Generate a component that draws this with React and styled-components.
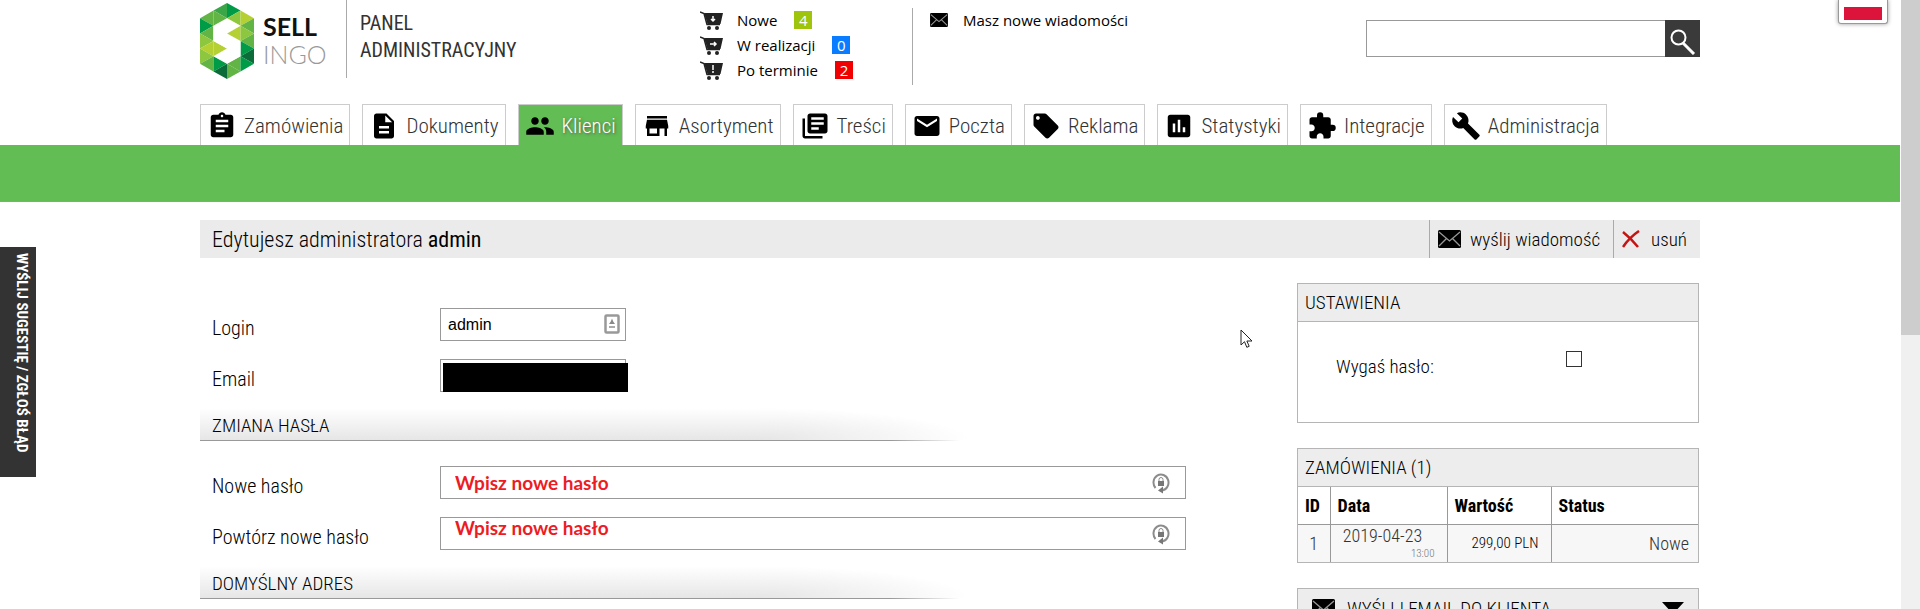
import React, { useState } from 'react';
import styled, { createGlobalStyle, css } from 'styled-components';
import {
  MdAssessment,
  MdAssignment,
  MdBuild,
  MdDescription,
  MdEmail,
  MdExtension,
  MdLibraryBooks,
  MdLocalOffer,
  MdPeople,
  MdStore
} from 'react-icons/md';

const narrow = '"Roboto Condensed", Roboto, sans-serif';

const tabs = [
  { label: 'Zamówienia', icon: MdAssignment },
  { label: 'Dokumenty', icon: MdDescription },
  { label: 'Klienci', icon: MdPeople, active: true },
  { label: 'Asortyment', icon: MdStore },
  { label: 'Treści', icon: MdLibraryBooks },
  { label: 'Poczta', icon: MdEmail },
  { label: 'Reklama', icon: MdLocalOffer },
  { label: 'Statystyki', icon: MdAssessment },
  { label: 'Integracje', icon: MdExtension },
  { label: 'Administracja', icon: MdBuild }
];

const statuses = [
  { label: 'Nowe', count: 4, color: '#9ec40b', mark: 'M13 5v5M11 8l2 2 2-2' },
  { label: 'W realizacji', count: 0, color: '#0a7cff', mark: 'M10 8h6M14 6l2 2-2 2' },
  { label: 'Po terminie', count: 2, color: '#f00000', mark: 'M13 4v5M13 10v2' }
];

const orders = [
  { id: 1, date: '2019-04-23', time: '13:00', total: '299,00 PLN', status: 'Nowe' }
];

// fill of every triangle in the four strips of the logo, top to bottom
const strips = [
  ['#62b445', '#009b47', '#62b445', '#8dc63f', '#b5d033', '#8dc63f', '#62b445'],
  ['#3aa648', '#62b445', '#62b445', '#fff', '#fff', '#b5d033', '#8dc63f', '#009b47', '#0b6b39'],
  ['#009b47', '#8dc63f', '#b5d033', '#b5d033', '#8dc63f', '#fff', '#fff', '#62b445', '#62b445'],
  ['#b5d033', '#62b445', '#8dc63f', '#62b445', '#009b47', '#0b6b39', '#009b47']
];

const logoTriangles = strips.flatMap((colors, strip) => {
  const w = 13;
  const h = 15;
  const tops = [2 * h, h, 0, h, 2 * h].map(y => y / 2);
  const x = strip * w;
  const left = tops[strip];
  const right = tops[strip + 1];
  const first = Math.min(left, right);
  return colors.map((fill, i) => {
    const y = first + (i * h) / 2;
    const onRight = (i % 2 === 0) === (right < left);
    const base = onRight ? x + w : x;
    const tip = onRight ? x : x + w;
    return { fill, points: `${base},${y} ${base},${y + h} ${tip},${y + h / 2}` };
  });
});

const LogoMark = () => (
  <svg width="54" height="76" viewBox="0 0 52 75" preserveAspectRatio="none" aria-hidden="true">
    {logoTriangles.map(t => (
      <polygon key={t.points} points={t.points} fill={t.fill} />
    ))}
    <polygon
      fill="#fff"
      points="26,15 39,22.5 26,30 39,37.5 39,52.5 26,60 13,52.5 26,45 13,37.5 13,22.5"
    />
  </svg>
);

const CartIcon = ({ mark }) => (
  <svg width="23" height="19" viewBox="0 0 23 19" aria-hidden="true">
    <path d="M0 1l4 1.500 3 11h13" fill="none" stroke="#222" strokeWidth="1.500" />
    <path d="M4 2h19l-2.500 11h-13z" fill="#222" />
    <circle cx="9" cy="17" r="2" fill="#222" />
    <circle cx="17" cy="17" r="2" fill="#222" />
    <path d={mark} fill="none" stroke="#fff" strokeWidth="1.500" />
  </svg>
);

const Envelope = ({ width, height }) => (
  <svg width={width} height={height} viewBox="0 0 23 18" aria-hidden="true">
    <rect width="23" height="18" rx="1.500" fill="#000" />
    <path
      d="M1 2l10.500 9L22 2M1 16l7.500-7.500M22 16l-7.500-7.500"
      fill="none"
      stroke="#999"
      strokeWidth="1.300"
    />
  </svg>
);

const CrossIcon = () => (
  <svg width="20" height="18" viewBox="0 0 20 18" aria-hidden="true">
    <path d="M1 2c5 4 11 10 15 15M17 1C11 5 5 11 1 17" fill="none" stroke="#c41414" strokeWidth="2.500" />
  </svg>
);

const SearchIcon = () => (
  <svg width="26" height="26" viewBox="0 0 26 26" aria-hidden="true">
    <circle cx="8.500" cy="8.500" r="7" fill="none" stroke="#fff" strokeWidth="2" />
    <path d="M13 14l11 11" stroke="#fff" strokeWidth="3" />
  </svg>
);

const CardIcon = () => (
  <svg width="16" height="20" viewBox="0 0 16 20" aria-hidden="true">
    <rect x="1.500" y="1.500" width="13" height="17" rx="1" fill="#fff" stroke="#999" strokeWidth="2.500" />
    <path d="M8 4.500l1.200 3L11 10H5l1.800-2.500z" fill="#888" />
    <path d="M5 13h6" stroke="#aaa" strokeWidth="2" />
  </svg>
);

const LockIcon = () => (
  <svg width="18" height="22" viewBox="0 0 18 22" aria-hidden="true">
    <path d="M3.500 16A7.500 8 0 1 1 10 18.500" fill="none" stroke="#8c8c8c" strokeWidth="2" />
    <path d="M11 14.500v7l-5-3z" fill="#777" />
    <rect x="6" y="9" width="6" height="5" fill="#777" />
    <path d="M7 9V7.500a2 2 0 0 1 4 0V9" fill="none" stroke="#888" />
  </svg>
);

const Pointer = () => (
  <PointerSvg width="13" height="20" viewBox="0 0 13 20" aria-hidden="true">
    <path
      d="M1 1v15l3.500-3.300 2.300 5.600 2.400-1-2.300-5.300H12z"
      fill="#fff"
      stroke="#222"
    />
  </PointerSvg>
);

const App = () => {
  const [login, setLogin] = useState('admin');
  const [expire, setExpire] = useState(false);

  return (
    <Shell>
      <GlobalStyle />
      <Page>
        <Container>
          <Header>
            <Brand href="#">
              <LogoMark />
              <BrandName>
                SELL
                <span>INGO</span>
              </BrandName>
            </Brand>
            <PanelName>
              PANEL
              <br />
              ADMINISTRACYJNY
            </PanelName>
            <StatusList>
              {statuses.map(s => (
                <Status key={s.label}>
                  <CartIcon mark={s.mark} />
                  <a href="#">{s.label}</a>
                  <Badge $color={s.color}>{s.count}</Badge>
                </Status>
              ))}
            </StatusList>
            <Messages href="#">
              <Envelope width={18} height={14} />
              Masz nowe wiadomości
            </Messages>
            <Search onSubmit={e => e.preventDefault()}>
              <input type="search" aria-label="Szukaj" />
              <button type="submit" aria-label="Szukaj">
                <SearchIcon />
              </button>
            </Search>
          </Header>
          <Tabs>
            {tabs.map(({ label, icon: Icon, active }) => (
              <Tab key={label} href="#" $active={active}>
                <Icon size={30} color="#000" />
                {label}
              </Tab>
            ))}
          </Tabs>
        </Container>
        <Band />
        <Container>
          <TitleBar>
            <h1>
              Edytujesz administratora <b>admin</b>
            </h1>
            <Action type="button">
              <Envelope width={23} height={18} />
              wyślij wiadomość
            </Action>
            <Action type="button">
              <CrossIcon />
              usuń
            </Action>
          </TitleBar>
          <Columns>
            <Form>
              <Field>
                <label htmlFor="login">Login</label>
                <InputBox $short>
                  <input id="login" value={login} onChange={e => setLogin(e.target.value)} />
                  <CardIcon />
                </InputBox>
              </Field>
              <Field>
                <label htmlFor="email">Email</label>
                <InputBox $short>
                  <input id="email" type="email" />
                  <Redaction />
                </InputBox>
              </Field>
              <SectionTitle>ZMIANA HASŁA</SectionTitle>
              <Field>
                <label htmlFor="password">Nowe hasło</label>
                <InputBox>
                  <input id="password" type="password" placeholder="Wpisz nowe hasło" />
                  <LockIcon />
                </InputBox>
              </Field>
              <Field>
                <label htmlFor="repeat">Powtórz nowe hasło</label>
                <InputBox $raised>
                  <input id="repeat" type="password" placeholder="Wpisz nowe hasło" />
                  <LockIcon />
                </InputBox>
              </Field>
              <SectionTitle>DOMYŚLNY ADRES</SectionTitle>
            </Form>
            <Side>
              <Card>
                <CardTitle>USTAWIENIA</CardTitle>
                <Setting>
                  <label htmlFor="expire">Wygaś hasło:</label>
                  <Checkbox
                    id="expire"
                    type="checkbox"
                    checked={expire}
                    onChange={e => setExpire(e.target.checked)}
                  />
                </Setting>
              </Card>
              <Card>
                <CardTitle>ZAMÓWIENIA (1)</CardTitle>
                <Orders>
                  <colgroup>
                    <col width="32" />
                    <col width="117" />
                    <col width="104" />
                    <col />
                  </colgroup>
                  <thead>
                    <tr>
                      <th>ID</th>
                      <th>Data</th>
                      <th>Wartość</th>
                      <th>Status</th>
                    </tr>
                  </thead>
                  <tbody>
                    {orders.map(o => (
                      <tr key={o.id}>
                        <IdCell>{o.id}</IdCell>
                        <DateCell>
                          {o.date}
                          <small>{o.time}</small>
                        </DateCell>
                        <PriceCell>{o.total}</PriceCell>
                        <StatusCell>{o.status}</StatusCell>
                      </tr>
                    ))}
                  </tbody>
                </Orders>
              </Card>
              <Card>
                <Toggle type="button">
                  <Envelope width={23} height={18} />
                  <span>WYŚLIJ EMAIL DO KLIENTA</span>
                  <Caret />
                </Toggle>
              </Card>
            </Side>
          </Columns>
        </Container>
        <Flag type="button" aria-label="Polski">
          <span />
        </Flag>
        <Feedback href="#">WYŚLIJ SUGESTIĘ / ZGŁOŚ BŁĄD</Feedback>
        <Pointer />
      </Page>
      <Scrollbar />
    </Shell>
  );
};

const GlobalStyle = createGlobalStyle`
  * {
    box-sizing: border-box;
  }
  body {
    margin: 0;
    background: #fff;
    color: #000;
    font-family: ${narrow};
    font-size: 19px;
    font-weight: 300;
    overflow: hidden;
  }
  a {
    color: inherit;
    text-decoration: none;
  }
  button, input {
    font: inherit;
    color: inherit;
  }
  button {
    padding: 0;
    border: 0;
    background: none;
    cursor: pointer;
  }
`;

const Shell = styled.div`
  display: flex;
  height: 100vh;
`;

const Page = styled.div`
  position: relative;
  flex: 1;
  min-width: 0;
  overflow: hidden;
`;

const Scrollbar = styled.div`
  width: 20px;
  border-left: 1px solid #fff;
  background: linear-gradient(#cdcdcd 55%, #f0f0f0 55%);
`;

const Container = styled.div`
  max-width: 1500px;
  margin: 0 auto;
`;

const Header = styled.header`
  display: flex;
  align-items: flex-start;
  height: 104px;
`;

const Brand = styled.a`
  display: flex;
  gap: 9px;
  width: 147px;
  height: 78px;
  padding-top: 3px;
  border-right: 1px solid #aaa;
`;

const BrandName = styled.span`
  padding-top: 9px;
  font: 700 25px/28px Lato, sans-serif;
  color: #111;
  span {
    display: block;
    font-weight: 300;
    color: #999;
  }
`;

const PanelName = styled.div`
  width: 353px;
  padding: 10px 0 0 13px;
  font-size: 20px;
  font-weight: 400;
  line-height: 27px;
  color: #333;
`;

const StatusList = styled.ul`
  display: grid;
  align-content: start;
  gap: 7px;
  width: 213px;
  height: 77px;
  margin: 8px 0 0;
  padding: 3px 0 0;
  border-right: 1px solid #aaa;
  list-style: none;
  font: 15px/18px "Open Sans", sans-serif;
`;

const Status = styled.li`
  display: flex;
  height: 18px;
  a {
    margin: 0 17px 0 14px;
  }
`;

const Badge = styled.span`
  min-width: 18px;
  height: 18px;
  background: ${p => p.$color};
  color: #fff;
  text-align: center;
`;

const Messages = styled.a`
  display: flex;
  align-items: center;
  gap: 15px;
  padding: 11px 0 0 17px;
  font: 15px/18px "Open Sans", sans-serif;
`;

const Search = styled.form`
  display: flex;
  width: 334px;
  height: 37px;
  margin: 20px 0 0 auto;
  input {
    flex: 1;
    min-width: 0;
    border: 1px solid #999;
    border-right: 0;
    background: #fff;
    padding: 0 8px;
    outline: 0;
  }
  button {
    width: 35px;
    padding: 6px 0 0 1px;
    line-height: 0;
    background: #3a3a3a;
  }
`;

const Tabs = styled.nav`
  display: flex;
  gap: 12px;
`;

const Tab = styled.a`
  display: flex;
  align-items: center;
  gap: 7px;
  height: 41px;
  padding: 1px 6px 0;
  border: 1px solid #ccc;
  border-bottom: 0;
  font-size: 21px;
  color: #333;
  ${p =>
    p.$active &&
    css`
      background: #62bd54;
      color: #fff;
      text-shadow: 1px 1px 3px #555;
    `}
`;

const Band = styled.div`
  height: 57px;
  border-bottom: 1px solid #999;
  background: #62bd54;
`;

const TitleBar = styled.div`
  display: flex;
  height: 38px;
  margin-top: 18px;
  background: #ebebeb;
  h1 {
    flex: 1;
    margin: 0;
    padding-left: 12px;
    font-size: 22px;
    font-weight: 300;
    line-height: 40px;
  }
`;

const Action = styled.button`
  display: flex;
  align-items: center;
  gap: 9px;
  padding: 0 13px 0 8px;
  border-left: 1px solid #aaa;
`;

const Columns = styled.div`
  display: flex;
  justify-content: space-between;
  padding-right: 1px;
`;

const Form = styled.form`
  width: 986px;
  padding-top: 50px;
`;

const Field = styled.div`
  display: flex;
  margin-bottom: 18px;
  label {
    width: 240px;
    padding: 8px 0 0 12px;
    font-size: 20px;
    line-height: 24px;
  }
`;

const InputBox = styled.div`
  position: relative;
  flex: ${p => (p.$short ? '0 0 186px' : '1')};
  input {
    display: block;
    width: 100%;
    height: 33px;
    padding: ${p => (p.$raised ? '0 40px 8px 14px' : '4px 40px 0 14px')};
    border: 1px solid #999;
    outline: 0;
    background: #fff;
    font: 16px "Liberation Sans", sans-serif;
    ${p => p.$short && 'padding: 0 30px 0 7px;'}
  }
  input::placeholder {
    color: #ed1c24;
    font: 700 19px Lato, sans-serif;
    opacity: 1;
  }
  svg {
    position: absolute;
    top: 6px;
    right: ${p => (p.$short ? 6 : 16)}px;
  }
`;

const Redaction = styled.span`
  position: absolute;
  inset: 4px -2px 0 3px;
  background: #000;
`;

// grey slope that fades out in a curve, over a line that fades with it
const SectionTitle = styled.h2`
  height: 33px;
  margin: -2px 0 25px;
  padding-left: 12px;
  font-size: 19px;
  font-weight: 300;
  line-height: 35px;
  background:
    linear-gradient(to right, #999 690px, transparent 760px) 0 100% / 100% 1px no-repeat,
    linear-gradient(to top, #e6e6e6, #fff) 0 0 / 560px 32px no-repeat,
    radial-gradient(210px 32px at 0 100%, #e6e6e6, #fff) 560px 0 / 426px 32px no-repeat;
`;

const Side = styled.aside`
  display: grid;
  align-content: start;
  gap: 25px;
  width: 402px;
  padding-top: 25px;
`;

const Card = styled.section`
  border: 1px solid #b5b5b5;
`;

const CardTitle = styled.h3`
  height: 38px;
  margin: 0;
  padding-left: 7px;
  border-bottom: 1px solid #b5b5b5;
  background: #ededed;
  font-size: 19px;
  font-weight: 300;
  line-height: 38px;
`;

const Setting = styled.div`
  display: flex;
  height: 100px;
  padding: 29px 116px 0 38px;
  justify-content: space-between;
  label {
    padding-top: 4px;
    line-height: 24px;
  }
`;

const Checkbox = styled.input`
  appearance: none;
  width: 16px;
  height: 16px;
  margin: 0;
  border: 1px solid #333;
  background: #fff;
  &:checked {
    background: #333;
  }
`;

const Orders = styled.table`
  width: 100%;
  table-layout: fixed;
  border-collapse: collapse;
  th {
    height: 37px;
    padding: 0 7px;
    font-size: 18px;
    text-align: left;
    border-bottom: 1px solid #999;
  }
  td {
    height: 38px;
    padding: 0;
    background: #f7f7f7;
    font-size: 18px;
    color: #333;
  }
  th + th,
  td + td {
    border-left: 1px solid #999;
  }
`;

const IdCell = styled.td`
  text-align: center;
`;

const DateCell = styled.td`
  && {
    padding-right: 12px;
    text-align: center;
    line-height: 22px;
  }
  small {
    display: block;
    font-size: 11px;
    line-height: 14px;
    text-align: right;
    color: #777;
  }
`;

const PriceCell = styled.td`
  && {
    padding-right: 12px;
    font-size: 15px;
    text-align: right;
    color: #000;
  }
`;

const StatusCell = styled.td`
  && {
    padding-right: 9px;
    text-align: right;
  }
`;

const Toggle = styled.button`
  display: flex;
  align-items: center;
  gap: 12px;
  width: 100%;
  height: 38px;
  padding: 0 14px;
  background: #ededed;
  text-align: left;
  span {
    flex: 1;
  }
`;

const Caret = styled.i`
  border: 11px solid transparent;
  border-top: 12px solid #000;
  border-bottom: 0;
`;

const Flag = styled.button`
  position: absolute;
  top: 0;
  right: 12px;
  width: 50px;
  height: 24px;
  padding: 7px 5px 4px;
  border: 1px solid #999;
  border-top: 0;
  border-radius: 0 0 3px 3px;
  background: #fff;
  box-shadow: 0 0 4px #999;
  span {
    display: block;
    height: 13px;
    background: #dc143c;
  }
`;

const Feedback = styled.a`
  position: absolute;
  top: 247px;
  left: 0;
  width: 36px;
  height: 230px;
  padding-top: 6px;
  background: #333;
  color: #fff;
  font-size: 15px;
  font-weight: 700;
  line-height: 28px;
  writing-mode: vertical-rl;
  white-space: nowrap;
`;

const PointerSvg = styled.svg`
  position: absolute;
  top: 329px;
  left: 1240px;
`;

export default App;
